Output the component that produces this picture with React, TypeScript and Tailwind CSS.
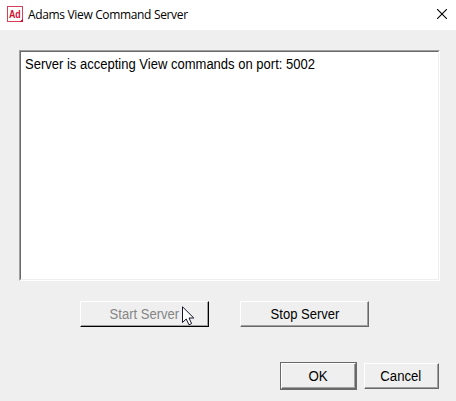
import type { ReactNode } from 'react';

function AdamsIcon() {
  return (
    <svg width="16" height="16" viewBox="0 0 16 16" className="shrink-0">
      <rect x="0.5" y="0.5" width="15" height="15" fill="#fff" stroke="#d8405a" />
      <path d="M16 12.5v3.5h-3.5z" fill="#d0102f" />
      <text x="1.9" y="12" fontSize="10" fontWeight="700" fill="#d0102f" textLength="11.8" lengthAdjust="spacingAndGlyphs" fontFamily="'Liberation Sans', sans-serif">Ad</text>
    </svg>
  );
}

function CloseIcon() {
  return (
    <svg width="10" height="10" viewBox="0 0 10 10" className="shrink-0" stroke="#000" strokeWidth="1.1">
      <path d="M0 0L10 10M10 0L0 10" />
    </svg>
  );
}

function Pointer() {
  return (
    <svg width="13" height="20" viewBox="0 0 13 20" className="absolute left-[102px] top-[5px]">
      <path d="M.5 .8V16.5L4.2 13L7 18.8L9.6 17.6L7 12H11.8Z" fill="#fff" stroke="#15152a" strokeWidth="1" />
    </svg>
  );
}

function Bevel({ className, children }: { className: string; children: ReactNode }) {
  return (
    <button className={`h-[26px] border border-t-white border-l-white border-r-[#696969] border-b-[#696969] ${className}`}>
      <span className="flex h-full w-full items-center justify-center border-r border-b border-[#a0a0a0] pt-px">{children}</span>
    </button>
  );
}

export default function App() {
  return (
    <div className="flex h-[401px] w-[456px] flex-col bg-[#efefef] text-[14px] leading-4 text-black [font-family:'Liberation_Sans',Arial,sans-serif]">
      <header className="flex h-[30px] shrink-0 items-center bg-white pr-[9px] pb-[2px] pl-[7px]">
        <AdamsIcon />
        <h1 className="ml-[5px] flex-1 whitespace-nowrap pt-px text-[12px] tracking-[-0.34px] [font-family:'Open_Sans','Noto_Sans',sans-serif]">Adams View Command Server</h1>
        <CloseIcon />
      </header>
      <main className="flex flex-col pt-5 pr-[16px] pl-[19px]">
        <div className="h-[231px] w-[421px] border border-t-[#a0a0a0] border-r-white border-b-white border-l-[#a0a0a0]">
          <div className="h-full border border-t-[#696969] border-r-[#efefef] border-b-[#efefef] border-l-[#696969] bg-white pt-1 pl-1">
            <p className="origin-left scale-x-[0.93] whitespace-nowrap">Server is accepting View commands on port: 5002</p>
          </div>
        </div>
        <div className="mt-5 ml-[61px] flex gap-[31px]">
          <div className="relative flex">
            <Bevel className="w-[129px] border-r-black! border-b-black! text-[#858585]">
              <span className="scale-x-[0.93]">Start Server</span>
            </Bevel>
            <Pointer />
          </div>
          <Bevel className="w-[129px]">
            <span className="ml-px scale-x-[0.93]">Stop Server</span>
          </Bevel>
        </div>
        <div className="mt-[35px] flex items-center justify-end gap-[7px] pr-[1px]">
          <div className="flex h-7 border border-[#696969]">
            <Bevel className="w-[75px]">
              <span className="scale-x-[0.95]">OK</span>
            </Bevel>
          </div>
          <Bevel className="w-[75px]">
            <span className="scale-x-[0.94]">Cancel</span>
          </Bevel>
        </div>
      </main>
    </div>
  );
}
